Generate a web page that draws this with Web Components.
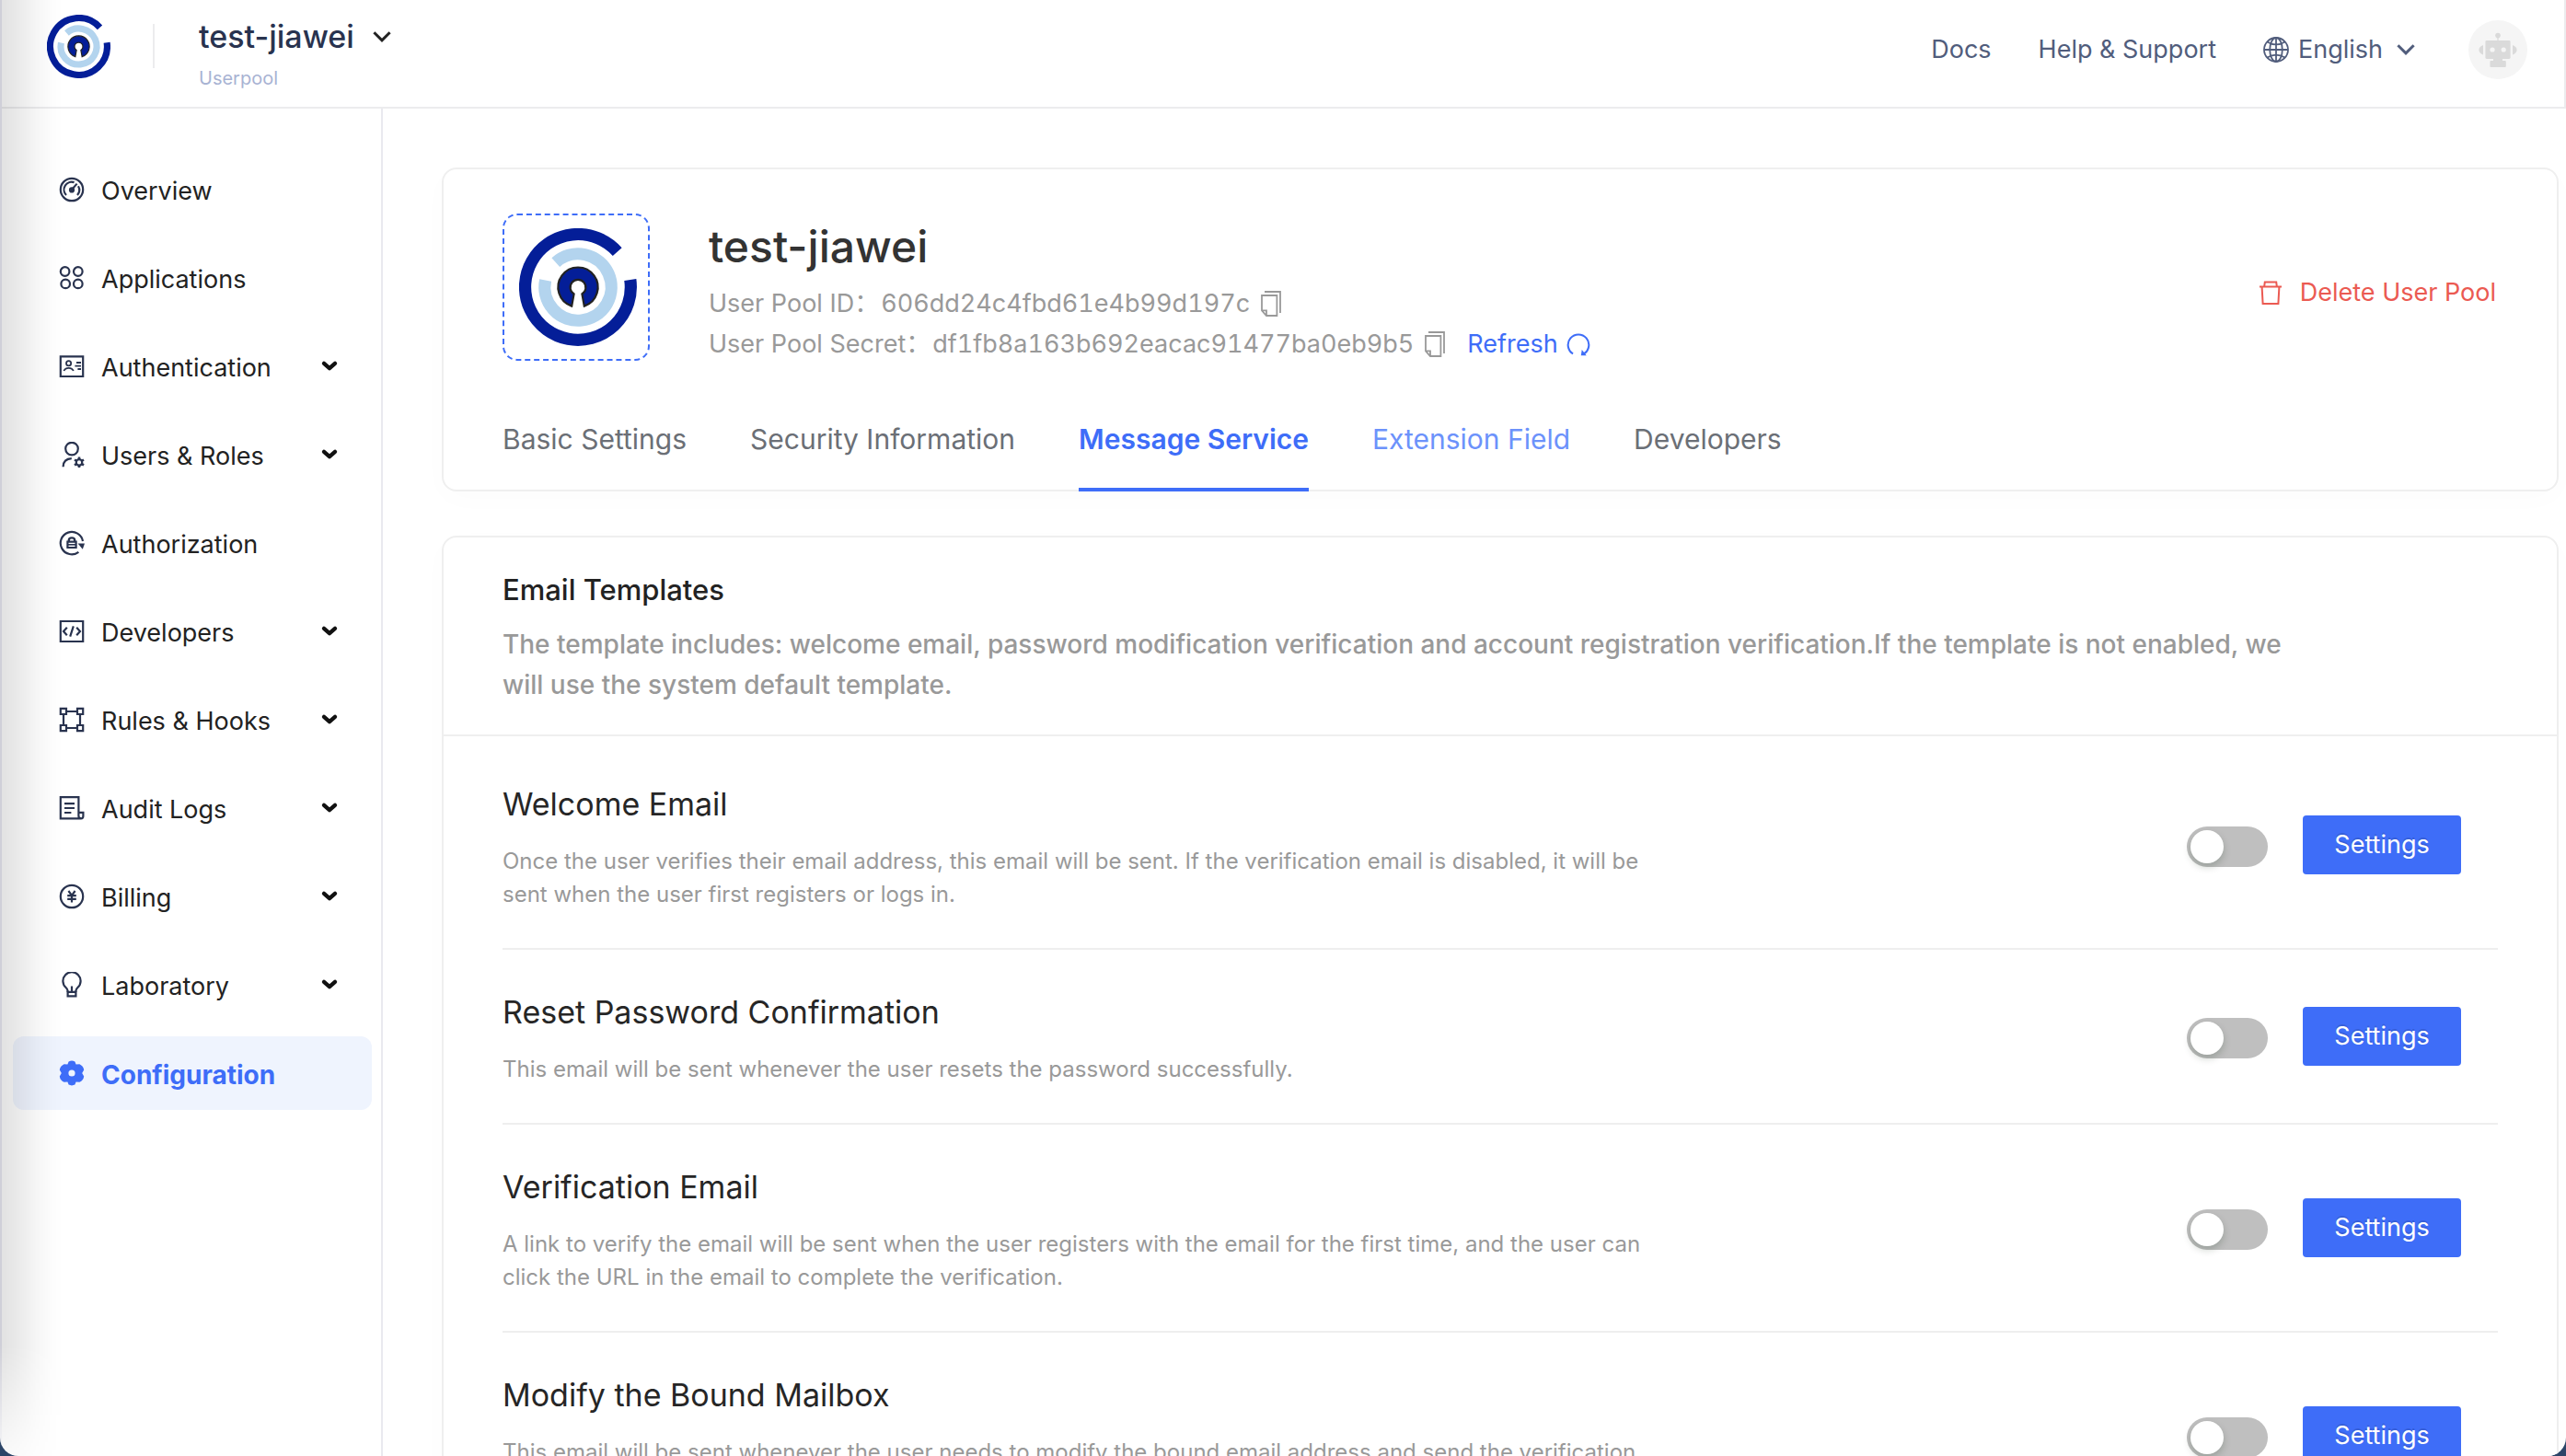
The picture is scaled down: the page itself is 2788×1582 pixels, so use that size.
<!DOCTYPE html>
<html lang="en">
<head>
<meta charset="utf-8">
<title>test-jiawei - Userpool</title>
<style>
  html { background: #2c4568; }
  body {
    margin: 0;
    height: 100vh;
    overflow: hidden;
    font-family: Inter, "Noto Sans CJK SC", sans-serif;
    font-size: 27px;
    line-height: 40px;
    color: #222;
  }
</style>
</head>
<body>
<console-app></console-app>

<script>
const BLUE = '#3e6df8';

/* ---------- icons ---------- */
const LOGO = `
  <path d="M56.8 -8A57.4 57.4 0 1 1 42.7 -38.4" fill="none" stroke="#041e98" stroke-width="13.2"/>
  <path d="M-24.2 -26.9A36.2 36.2 0 1 1 -35.4 -7.5" fill="none" stroke="#b3d4ee" stroke-width="13.2"/>
  <path fill="#041e98" d="M-6.8 20.6A21.6 21.6 0 1 1 6.8 20.6L4.4 7.4A8.4 8.4 0 1 0 -4.4 7.4Z"/>`;

const ICONS = {
  logo: ['-64 -64 128 128', LOGO],
  gauge: ['0 0 28 28', `
    <circle cx="14" cy="14" r="12.2"/>
    <path d="M8 20A8.4 8.4 0 0 1 16.6 6.1M21 10.2A8.4 8.4 0 0 1 20 20M14 14L19.6 7.6"/>
    <circle cx="14" cy="14.4" r="2" fill="currentColor"/>`],
  apps: ['0 0 28 28', `
    <circle cx="6.6" cy="7" r="4.8"/><circle cx="20.8" cy="7" r="4.8"/>
    <circle cx="7.2" cy="20.4" r="4.8"/><circle cx="20.8" cy="20.4" r="4.8"/>`],
  idcard: ['0 0 28 28', `
    <path d="M1.8 3.4H26.2V25H1.8Z"/>
    <g stroke-width="1.8"><circle cx="10.6" cy="10.8" r="2.6"/>
    <path d="M5.4 19Q6.6 15.8 10.6 15.8T15.8 19M19 10H24M17.4 13.6H24M20.4 17H24"/></g>`],
  user: ['0 0 28 28', `
    <circle cx="14" cy="7.6" r="6.8"/><path d="M4.6 27.2Q4.8 18.6 13.8 18.2"/>
    <circle cx="22" cy="22.4" r="3.2"/>
    <path stroke-width="2.6" d="M22 16.6V19M22 25.8V28.2M17 19.5L19 20.7M25 24.1L27 25.3M17 25.3L19 24.1M25 20.7L27 19.5"/>`],
  lock: ['0 0 28 28', `
    <path d="M21.4 23.8A12.2 12.2 0 1 1 26 12"/>
    <path d="M20.6 14.4H28L25.8 20.8Z" fill="currentColor" stroke="none"/>
    <path d="M10.8 12.4V11Q10.8 8.4 14 8.4T17.2 11V12.4" stroke-width="2.4"/>
    <path d="M9.4 12.6H18.6V19H9.4Z" stroke-width="2.2"/><path d="M10 15.8H18" stroke-width="1.6"/>`],
  code: ['0 0 28 28', `
    <path d="M1.8 3H26.2V25H1.8Z"/>
    <path d="M8.8 9.8L5 14L8.8 18.2M19.2 9.8L23 14L19.2 18.2M15.8 8.4L12.2 19.6"/>`],
  nodes: ['0 0 28 28', `
    <path d="M1.8 1.8H8V8H1.8ZM20 1.8H26.2V8H20ZM1.8 20H8V26.2H1.8ZM20 20H26.2V26.2H20ZM8 5H20M8 23H20M5 8V20M23 8V20"/>`],
  logs: ['0 0 28 28', `
    <path d="M21.4 19V2.2H1.8V25.4H24Q26.4 25.4 26.4 22.8V18.8H21.4V22.4Q21.4 25.2 24 25.2"/>
    <path d="M6 9.2H17M6 14H17M6 19H13.4"/>`],
  yen: ['0 0 28 28', `
    <circle cx="14" cy="14" r="12.2"/>
    <path d="M10.4 8L14 12.8L17.6 8M14 12.8V20.4M9.2 13.2H18.8M9.2 16.8H18.8"/>`],
  bulb: ['0 0 28 28', `
    <path d="M9.6 22V20.6Q9.4 18.6 7.6 17A9.6 9.6 0 1 1 20.4 17Q18.6 18.6 18.4 20.6V22"/>
    <path d="M9.6 21.8H18.4V26.4H9.6ZM14 15.4V21"/>`],
  gear: ['0 0 28 28', `
    <path fill="currentColor" stroke="none" fill-rule="evenodd" d="M10.6 1.4Q14 -.2 17.4 1.4L18.6 4.6L22.4 4.2Q26.6 6.2 27.2 10.6L25.2 14L27.2 17.4Q26.6 21.8 22.4 23.8L18.6 23.4L17.4 26.6Q14 28.2 10.6 26.6L9.4 23.4L5.6 23.8Q1.4 21.8 .8 17.4L2.8 14L.8 10.6Q1.4 6.2 5.6 4.2L9.4 4.6ZM14 10.4A3.6 3.6 0 1 0 14 17.6A3.6 3.6 0 1 0 14 10.4Z"/>`],
  globe: ['0 0 28 28', `
    <g stroke-width="1.8"><circle cx="14" cy="14" r="13"/><ellipse cx="14" cy="14" rx="6.8" ry="13"/>
    <path d="M14 1V27M1 14H27M4.4 5.4Q14 11.4 23.6 5.4M4.4 22.6Q14 16.6 23.6 22.6"/></g>`],
  caret: ['0 0 20 20', `<path d="M1.4 5.2L10 13.8L18.6 5.2" stroke-width="3"/>`],
  navcaret: ['0 0 20 20', `<path d="M4 6.9L10 12.1L16 6.9" stroke-width="4.4" stroke-linecap="round" stroke-linejoin="round"/>`],
  copy: ['0 0 22 28', `
    <path d="M4 1H21V24M1 5H17.4V27H6L1 21.4Z" stroke-width="1.8"/><path d="M1 21.4H6V27" stroke-width="1.8"/>`],
  refresh: ['0 0 28 28', `
    <path d="M7.6 25.2A12.2 12.2 0 1 1 20.4 25.2"/>
    <path d="M18 20.4L17 27.2H23.4Z" fill="currentColor" stroke="none"/>`],
  trash: ['0 0 28 28', `
    <path d="M2 7.4H26M7.2 7.2L7.8 2.4H20.2L20.8 7.2M4.6 7.6L5.6 26H22.4L23.4 7.6" stroke-width="2"/>`],
  robot: ['0 0 64 64', `
    <g fill="#dadada" stroke="none"><rect width="64" height="64" fill="#f5f5f5"/>
    <circle cx="32" cy="16.6" r="2.8"/><rect x="31.4" y="18" width="1.2" height="5"/>
    <rect x="18.4" y="22" width="27.2" height="20" rx="1.4"/>
    <path d="M16 27V37.4Q11.4 35.6 11.4 32.2T16 27ZM48 27V37.4Q52.6 35.6 52.6 32.2T48 27Z"/>
    <rect x="27" y="42" width="10" height="3"/><rect x="23.4" y="44" width="17.4" height="7" rx="1"/>
    <circle cx="26" cy="32" r="2.6" fill="#f5f5f5"/><circle cx="38.2" cy="32" r="2.6" fill="#f5f5f5"/></g>`],
};

/* ---------- base ---------- */
class Base extends HTMLElement {
  constructor() {
    super();
    this.attachShadow({ mode: 'open' });
  }
  connectedCallback() {
    this.shadowRoot.innerHTML = `<style>
      *, *::before, *::after { box-sizing: border-box; }
      h1, h2, h3, p { margin: 0; font-weight: inherit; }
      a { color: inherit; text-decoration: none; }
      button, select, input { font: inherit; color: inherit; background: none; border: 0; margin: 0; padding: 0; cursor: pointer; }
      ${this.css()}</style>${this.html()}`;
  }
  css() { return ''; }
  html() { return '<slot></slot>'; }
  attr(name) { return this.getAttribute(name) || ''; }
}
const define = (name, cls) => customElements.define(name, cls);

define('ui-icon', class extends Base {
  css() {
    return `:host { display: inline-block; flex: none; width: 28px; height: 28px; }
      svg { display: block; width: 100%; height: 100%; fill: none; stroke: currentColor; stroke-width: 2.2; }`;
  }
  html() {
    const [box, body] = ICONS[this.attr('name')];
    return `<svg viewBox="${box}" aria-hidden="true">${body}</svg>`;
  }
});

/* ---------- header ---------- */
define('app-header', class extends Base {
  css() {
    return `
      :host { display: flex; height: 118px; padding: 0 40px 0 51px; border: 2px solid #ececee; border-width: 0 2px 2px 0; box-sizing: border-box; }
      .brand { display: flex; align-items: center; height: 100px; }
      .brand ui-icon { width: 69px; height: 69px; }
      .brand::after { content: ""; width: 2px; height: 48px; margin: 0 48px 0 46px; background: #ececee; }
      .pool { padding-top: 20px; }
      .pool button { display: flex; align-items: center; gap: 20px; font-size: 34px; font-weight: 500; color: #29334f; }
      .pool ui-icon { width: 20px; height: 20px; color: #222; }
      .pool p { margin-top: 11px; font-size: 20px; line-height: 28px; color: #a8b3d3; }
      nav { display: flex; align-items: center; gap: 51px; height: 108px; margin-left: auto; color: #515d7c; }
      .lang { display: flex; align-items: center; gap: 10px; }
      .lang select { appearance: none; }
      .lang .caret { width: 20px; height: 20px; margin-left: 4px; }
      .avatar { display: block; width: 64px; height: 64px; margin-left: 7px; border-radius: 50%; overflow: hidden; }
      .avatar ui-icon { width: 64px; height: 64px; }`;
  }
  html() {
    return `
      <a class="brand" href="#" aria-label="Home"><ui-icon name="logo"></ui-icon></a>
      <div class="pool">
        <button aria-haspopup="menu">test-jiawei<ui-icon name="caret"></ui-icon></button>
        <p>Userpool</p>
      </div>
      <nav>
        <a href="#docs">Docs</a>
        <a href="#help">Help &amp; Support</a>
        <label class="lang"><ui-icon name="globe"></ui-icon>
          <select aria-label="Language"><option>English</option></select>
          <ui-icon class="caret" name="caret"></ui-icon></label>
        <button class="avatar" aria-label="Account"><ui-icon name="robot"></ui-icon></button>
      </nav>`;
  }
});

/* ---------- sidebar ---------- */
define('nav-item', class extends Base {
  css() {
    return `
      :host { display: block; }
      a, button { display: flex; align-items: center; width: 100%; height: 80px; padding: 0 36px 0 50px; border-radius: 12px; text-align: left; }
      ui-icon { color: #29334f; }
      span { flex: 1; margin-left: 18px; padding-top: 4px; }
      .caret { width: 20px; height: 20px; color: #111; }
      :host([active]) a { background: #eff4fe; color: ${BLUE}; font-size: 28px; font-weight: 700; }
      :host([active]) ui-icon { color: inherit; }`;
  }
  html() {
    const body = `<ui-icon name="${this.attr('icon')}"></ui-icon><span><slot></slot></span>`;
    return this.hasAttribute('group')
      ? `<button aria-expanded="false">${body}<ui-icon class="caret" name="navcaret"></ui-icon></button>`
      : `<a href="#">${body}</a>`;
  }
});

define('side-nav', class extends Base {
  css() {
    return `
      :host { display: block; flex: none; width: 416px; padding: 48px 10px 0 14px; border-right: 2px solid #e9e9ef; box-sizing: border-box; }
      nav { display: flex; flex-direction: column; gap: 16px; }`;
  }
  html() {
    return `<nav>
      <nav-item icon="gauge">Overview</nav-item>
      <nav-item icon="apps">Applications</nav-item>
      <nav-item icon="idcard" group>Authentication</nav-item>
      <nav-item icon="user" group>Users &amp; Roles</nav-item>
      <nav-item icon="lock">Authorization</nav-item>
      <nav-item icon="code" group>Developers</nav-item>
      <nav-item icon="nodes" group>Rules &amp; Hooks</nav-item>
      <nav-item icon="logs" group>Audit Logs</nav-item>
      <nav-item icon="yen" group>Billing</nav-item>
      <nav-item icon="bulb" group>Laboratory</nav-item>
      <nav-item icon="gear" active>Configuration</nav-item>
    </nav>`;
  }
});

/* ---------- cards ---------- */
define('ui-card', class extends Base {
  css() {
    return `:host { display: block; border: 2px solid #efefef; border-radius: 16px; background: #fff; box-shadow: 0 8px 32px rgba(0, 30, 20, .015); }`;
  }
});

define('secret-line', class extends Base {
  css() {
    return `
      :host { display: flex; align-items: center; line-height: 44px; color: #999; }
      .value { margin-left: 2px; font-variant-numeric: tabular-nums; }
      .copy { display: flex; margin-left: 12px; }
      .copy ui-icon { width: 22px; height: 28px; }`;
  }
  html() {
    return `<span>${this.attr('label')}：</span><span class="value">${this.attr('value')}</span>
      <button class="copy" aria-label="Copy"><ui-icon name="copy"></ui-icon></button><slot></slot>`;
  }
});

define('refresh-button', class extends Base {
  css() {
    return `:host { display: block; margin-left: 24px; color: ${BLUE}; }
      button { display: flex; align-items: center; gap: 9px; line-height: 44px; }
      ui-icon { width: 26px; height: 26px; }`;
  }
  html() { return `<button><slot></slot><ui-icon name="refresh"></ui-icon></button>`; }
});

define('pool-card', class extends Base {
  css() {
    return `
      .head { display: flex; padding: 48px 64px 0; }
      .logo { display: flex; flex: none; align-items: center; justify-content: center; width: 160px; height: 160px; padding-left: 4px; border: 2px dashed ${BLUE}; border-radius: 16px; }
      .logo ui-icon { width: 128px; height: 128px; }
      .info { flex: 1; margin-left: 64px; }
      h1 { margin-bottom: 4px; font-size: 48px; line-height: 72px; font-weight: 500; color: #333; }
      .delete { display: flex; align-items: center; gap: 18px; align-self: center; padding: 8px 2px 0 0; color: #eb5a52; }
      nav { display: flex; gap: 69px; margin: 61px 64px -2px; font-size: 30px; color: #6b6f76; }
      nav a { padding-bottom: 33px; border-bottom: 4px solid transparent; }
      nav a[aria-current] { border-color: ${BLUE}; color: ${BLUE}; font-weight: 600; }
      nav a.hover { color: #6c92fb; }`;
  }
  html() {
    return `<ui-card>
      <div class="head">
        <button class="logo" aria-label="Change logo"><ui-icon name="logo"></ui-icon></button>
        <div class="info">
          <h1>test-jiawei</h1>
          <secret-line label="User Pool ID" value="606dd24c4fbd61e4b99d197c"></secret-line>
          <secret-line label="User Pool Secret" value="df1fb8a163b692eacac91477ba0eb9b5"><refresh-button>Refresh</refresh-button></secret-line>
        </div>
        <button class="delete"><ui-icon name="trash"></ui-icon>Delete User Pool</button>
      </div>
      <nav>
        <a href="#basic">Basic Settings</a>
        <a href="#security">Security Information</a>
        <a href="#message" aria-current="page">Message Service</a>
        <a href="#extension" class="hover">Extension Field</a>
        <a href="#developers">Developers</a>
      </nav>
    </ui-card>`;
  }
});

define('toggle-switch', class extends Base {
  css() {
    return `
      :host { display: block; margin-top: 4px; }
      input { display: flex; appearance: none; width: 88px; height: 44px; padding: 4px; border-radius: 22px; background: #bfbfbf; }
      input::before { content: ""; width: 36px; height: 36px; border-radius: 50%; background: #fff; box-shadow: 0 4px 8px rgba(0, 35, 11, .2); }
      input:checked { background: ${BLUE}; justify-content: flex-end; }`;
  }
  html() { return `<input type="checkbox" role="switch" aria-label="${this.attr('label')}">`; }
});

define('template-row', class extends Base {
  css() {
    return `
      :host { display: flex; align-items: center; border-bottom: 2px solid #eee; padding-right: 40px; }
      .text { flex: 1; padding: 46px 0 40px; }
      h3 { font-size: 34px; line-height: 44px; color: #262626; }
      p { max-width: 1260px; margin-top: 22px; font-size: 24px; line-height: 36px; color: #999; }
      .settings { width: 172px; height: 64px; margin-left: 38px; border-radius: 4px; background: ${BLUE}; color: #fff; text-shadow: 0 -2px 0 rgba(0, 0, 0, .12); }`;
  }
  html() {
    return `<div class="text"><h3>${this.attr('heading')}</h3><p><slot></slot></p></div>
      <toggle-switch label="${this.attr('heading')}"></toggle-switch>
      <button class="settings">Settings</button>`;
  }
});

define('template-card', class extends Base {
  css() {
    return `
      header { padding: 37px 64px 32px; border-bottom: 2px solid #efefef; }
      h2 { font-size: 31px; font-weight: 500; }
      header p { max-width: 1960px; margin-top: 17px; font-size: 28px; line-height: 44px; font-weight: 500; color: #999; }
      .rows { padding: 6px 64px 0; }`;
  }
  html() {
    return `<ui-card>
      <header>
        <h2>Email Templates</h2>
        <p>The template includes: welcome email, password modification verification and account registration verification.If the template is not enabled, we will use the system default template.</p>
      </header>
      <div class="rows">
        <template-row heading="Welcome Email">Once the user verifies their email address, this email will be sent. If the verification email is disabled, it will be sent when the user first registers or logs in.</template-row>
        <template-row heading="Reset Password Confirmation">This email will be sent whenever the user resets the password successfully.</template-row>
        <template-row heading="Verification Email">A link to verify the email will be sent when the user registers with the email for the first time, and the user can click the URL in the email to complete the verification.</template-row>
        <template-row heading="Modify the Bound Mailbox">This email will be sent whenever the user needs to modify the bound email address and send the verification email.</template-row>
      </div>
    </ui-card>`;
  }
});

/* ---------- window ---------- */
define('console-app', class extends Base {
  css() {
    return `
      :host { display: flex; flex-direction: column; position: relative; height: 100vh; overflow: hidden; border-radius: 0 0 20px 20px; background: #fff; }
      .body { display: flex; flex: 1; min-height: 0; }
      main { flex: 1; min-width: 0; padding: 64px 8px 0 64px; }
      pool-card, template-card { display: block; margin-bottom: 48px; }
      .edge { position: absolute; inset: 0 auto 0 0; width: 68px; border-left: 2px solid #cfcfd8; pointer-events: none;
        background: linear-gradient(to right, rgba(0,0,0,.115), rgba(0,0,0,.09) 22%, rgba(0,0,0,.035) 58%, rgba(0,0,0,.008) 85%, transparent);
        mask-image: linear-gradient(to top, rgba(0,0,0,.2), #000 120px); }`;
  }
  html() {
    return `<app-header></app-header>
      <div class="body"><side-nav></side-nav>
        <main><pool-card></pool-card><template-card></template-card></main>
      </div>
      <div class="edge"></div>`;
  }
});
</script>
</body>
</html>
